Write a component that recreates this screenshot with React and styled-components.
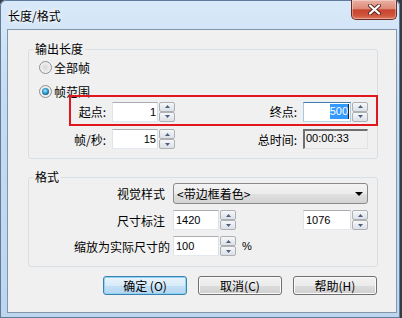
import React from 'react';
import styled, { createGlobalStyle } from 'styled-components';

//---------------Styled Components-----------------//
const GlobalStyle = createGlobalStyle`
  html, body {
    margin: 0;
    padding: 0;
    background: #363c43;
  }
  body {
    font-family: "Noto Sans CJK SC", "Liberation Sans", sans-serif;
    font-size: 12px;
    color: #000;
  }
`;

const Window = styled.div`
  box-sizing: border-box;
  width: 400px;
  height: 318px;
  padding: 0 3px 5px 7px;
  display: flex;
  flex-direction: column;
  border-radius: 6px 6px 2px 2px;
  background: linear-gradient(180deg, #d9e9f9 0%, #c6dcf2 30%, #bdd5ee 100%);
  box-shadow: inset 0 0 0 1px #5f7c9c;
  overflow: hidden;
`;

const TitleBar = styled.div`
  flex: none;
  height: 29px;
  display: flex;
  align-items: flex-start;
  justify-content: space-between;
`;

const Title = styled.span`
  margin: 9px 0 0 1px;
  line-height: 14px;
  text-shadow: 0 0 6px #fff, 0 0 3px #fff;
`;

const CloseButton = styled.div`
  box-sizing: border-box;
  width: 46px;
  height: 20px;
  border: 1px solid #6a2c22;
  border-top: none;
  border-radius: 0 0 5px 5px;
  background: linear-gradient(
    180deg,
    #eab0a2 0%,
    #dd8b79 45%,
    #c9452f 52%,
    #cf5239 80%,
    #e07a62 100%
  );
  box-shadow: inset 0 0 0 1px rgba(255, 255, 255, 0.35);
  display: flex;
  align-items: center;
  justify-content: center;
`;

const Client = styled.div`
  flex: 1;
  box-sizing: border-box;
  border: 1px solid #8296ab;
  background: #f0f0f0;
  display: flex;
  flex-direction: column;
`;

const Group = styled.fieldset`
  margin: ${(p) => p.$top}px 18px 0 20px;
  padding: ${(p) => p.$pt}px 0 ${(p) => p.$pb}px 0;
  border: 1px solid #d5dfe5;
  border-radius: 3px;
  min-width: 0;
`;

const Legend = styled.legend`
  margin-left: 4px;
  padding: 0 2px;
  font-size: 12px;
  line-height: 12px;
`;

const RadioRow = styled.label`
  display: flex;
  align-items: center;
  gap: 2px;
  height: 16px;
  padding-left: 10px;
  margin-top: ${(p) => p.$mt || 0}px;
`;

const RadioCircle = styled.span`
  box-sizing: border-box;
  width: 13px;
  height: 13px;
  border-radius: 50%;
  border: 1px solid #8e8f8f;
  background: radial-gradient(circle at 50% 50%, #d6d6d6 0%, #ececec 55%, #fbfbfb 100%);
  display: flex;
  align-items: center;
  justify-content: center;
`;

const RadioDot = styled.span`
  width: 7px;
  height: 7px;
  border-radius: 50%;
  background: radial-gradient(
    circle at 45% 40%,
    #b6ecff 0%,
    #3fa9d9 35%,
    #176591 70%,
    #0f3f61 100%
  );
`;

const FieldRow = styled.div`
  position: relative;
  box-sizing: border-box;
  display: flex;
  align-items: center;
  height: ${(p) => (p.$framed ? 31 : 20)}px;
  margin: ${(p) => p.$mt}px -1px 0 40px;
  padding: ${(p) => (p.$framed ? '2px 8px 0 0' : '0 8px 0 0')};
  border-style: solid;
  border-width: ${(p) => (p.$framed ? '2px' : '0 2px')};
  border-color: ${(p) => (p.$framed ? '#e2161d' : 'transparent')};
`;

const FieldLabel = styled.span`
  flex: none;
  width: ${(p) => (p.$w ? `${p.$w}px` : 'auto')};
  margin-left: ${(p) => (p.$push ? 'auto' : '0')};
  margin-right: 6px;
  text-align: right;
  white-space: nowrap;
`;

const Spin = styled.div`
  flex: none;
  display: flex;
  gap: 1px;
  height: 20px;
`;

const TextBox = styled.div`
  box-sizing: border-box;
  width: ${(p) => p.$w}px;
  height: 20px;
  padding: ${(p) => (p.$left ? '0 2px 0 2px' : '0 1px 0 2px')};
  background: #fff;
  border: 1px solid;
  border-color: ${(p) =>
    p.$focused
      ? '#3d7bad #a4c9e3 #b7d9ed #a4c9e3'
      : '#abadb3 #dbdfe6 #e3e9ef #e2e3ea'};
  display: flex;
  align-items: center;
  justify-content: ${(p) => (p.$left ? 'flex-start' : 'flex-end')};
  font-family: "Liberation Sans", sans-serif;
  font-size: 11px;
`;

const Selected = styled.span`
  background: #3399ff;
  color: #fff;
  line-height: 15px;
`;

const Caret = styled.span`
  width: 1px;
  height: 15px;
  background: #222;
`;

const Spinner = styled.div`
  display: flex;
  flex-direction: column;
  width: 16px;
`;

const SpinButton = styled.div`
  flex: 1;
  box-sizing: border-box;
  border: 1px solid #adb1b5;
  border-radius: 2px;
  background: linear-gradient(180deg, #f6f7f8 0%, #e6e9ed 60%, #dde1e6 100%);
  display: flex;
  align-items: center;
  justify-content: center;
`;

const TimeBox = styled.div`
  box-sizing: border-box;
  flex: none;
  width: 65px;
  height: 20px;
  border-style: solid;
  border-width: 2px 1px 1px 2px;
  border-color: #6f6f6f #e2e2e2 #e2e2e2 #6f6f6f;
  background: #f0f0f0;
  font-family: "Liberation Sans", sans-serif;
  font-size: 11px;
  line-height: 14px;
  padding-left: 1px;
`;

const FormRow = styled.div`
  display: flex;
  align-items: center;
  height: ${(p) => p.$h || 20}px;
  margin-top: ${(p) => p.$mt || 0}px;
  padding-right: 9px;
`;

const FormLabel = styled.span`
  flex: none;
  width: ${(p) => (p.$tight ? 141 : 136)}px;
  margin-right: ${(p) => (p.$tight ? 3 : 8)}px;
  text-align: right;
  white-space: nowrap;
`;

const Spacer = styled.span`
  flex: 1;
`;

const Select = styled.div`
  box-sizing: border-box;
  width: 197px;
  height: 21px;
  padding: 0 4px 0 3px;
  border: 1px solid #8a8a8a;
  border-radius: 3px;
  background: linear-gradient(180deg, #f3f3f3 0%, #ececec 50%, #e0e0e0 51%, #d4d4d4 100%);
  display: flex;
  align-items: center;
  justify-content: space-between;
`;

const Percent = styled.span`
  margin-left: 6px;
  font-family: "Liberation Sans", sans-serif;
  font-size: 11px;
`;

const ButtonRow = styled.div`
  display: flex;
  justify-content: flex-end;
  gap: 11px;
  margin-top: 9px;
  padding-right: 19px;
`;

const Button = styled.button`
  box-sizing: border-box;
  width: 84px;
  height: 19px;
  padding: 0;
  border: 1px solid ${(p) => (p.$default ? '#3c7fb1' : '#707070')};
  border-radius: 3px;
  background: ${(p) =>
    p.$default
      ? 'linear-gradient(180deg, #e8f4fc 0%, #d8ebf9 50%, #c4e0f6 51%, #b5d6f0 100%)'
      : 'linear-gradient(180deg, #f2f2f2 0%, #ebebeb 50%, #dddddd 51%, #cfcfcf 100%)'};
  box-shadow: inset 0 0 0 1px ${(p) => (p.$default ? '#8fd3f5' : '#fbfbfb')};
  font-family: "Noto Sans CJK SC", "Liberation Sans", sans-serif;
  font-size: 12px;
  line-height: 1;
  color: #000;
`;
//---------End of Styled Components----------------//

const Arrow = ({ down }) => (
  <svg width="5" height="3" viewBox="0 0 5 3">
    <path d={down ? 'M0 0H5L2.5 3Z' : 'M0 3H5L2.5 0Z'} fill="#4b5f82" />
  </svg>
);

const SpinBox = ({ w, left, focused, children }) => (
  <Spin>
    <TextBox $w={w} $left={left} $focused={focused}>
      {children}
    </TextBox>
    <Spinner>
      <SpinButton>
        <Arrow />
      </SpinButton>
      <SpinButton>
        <Arrow down />
      </SpinButton>
    </Spinner>
  </Spin>
);

export default function App() {
  return (
    <>
      <GlobalStyle />
      <Window>
        <TitleBar>
          <Title>长度/格式</Title>
          <CloseButton>
            <svg width="13" height="11" viewBox="0 0 13 11">
              <path d="M2 1.5L11 9.5M11 1.5L2 9.5" stroke="#5a2a24" strokeWidth="4" strokeLinecap="round" />
              <path d="M2 1.5L11 9.5M11 1.5L2 9.5" stroke="#fff" strokeWidth="2.2" strokeLinecap="round" />
            </svg>
          </CloseButton>
        </TitleBar>
        <Client>
          <Group $top={13} $pt={4} $pb={9}>
            <Legend>输出长度</Legend>
            <RadioRow>
              <RadioCircle />
              全部帧
            </RadioRow>
            <RadioRow $mt={8}>
              <RadioCircle>
                <RadioDot />
              </RadioCircle>
              帧范围
            </RadioRow>
            <FieldRow $framed $mt={-4}>
              <FieldLabel $w={35}>起点:</FieldLabel>
              <SpinBox w={46}>1</SpinBox>
              <FieldLabel $push>终点:</FieldLabel>
              <SpinBox w={48} focused>
                <Selected>500</Selected>
                <Caret />
              </SpinBox>
            </FieldRow>
            <FieldRow $mt={3}>
              <FieldLabel $w={35}>帧/秒:</FieldLabel>
              <SpinBox w={46}>15</SpinBox>
              <FieldLabel $push>总时间:</FieldLabel>
              <TimeBox>00:00:33</TimeBox>
            </FieldRow>
          </Group>
          <Group $top={12} $pt={0} $pb={10}>
            <Legend>格式</Legend>
            <FormRow $h={21}>
              <FormLabel>视觉样式</FormLabel>
              <Select>
                <span>&lt;带边框着色&gt;</span>
                <svg width="8" height="4" viewBox="0 0 8 4">
                  <path d="M0 0H8L4 4Z" fill="#000" />
                </svg>
              </Select>
            </FormRow>
            <FormRow $mt={6}>
              <FormLabel>尺寸标注</FormLabel>
              <SpinBox w={46} left>1420</SpinBox>
              <Spacer />
              <SpinBox w={48} left>1076</SpinBox>
            </FormRow>
            <FormRow $mt={6}>
              <FormLabel $tight>缩放为实际尺寸的</FormLabel>
              <SpinBox w={46} left>100</SpinBox>
              <Percent>%</Percent>
            </FormRow>
          </Group>
          <ButtonRow>
            <Button $default>确定 (O)</Button>
            <Button>取消(C)</Button>
            <Button>帮助(H)</Button>
          </ButtonRow>
        </Client>
      </Window>
    </>
  );
}
